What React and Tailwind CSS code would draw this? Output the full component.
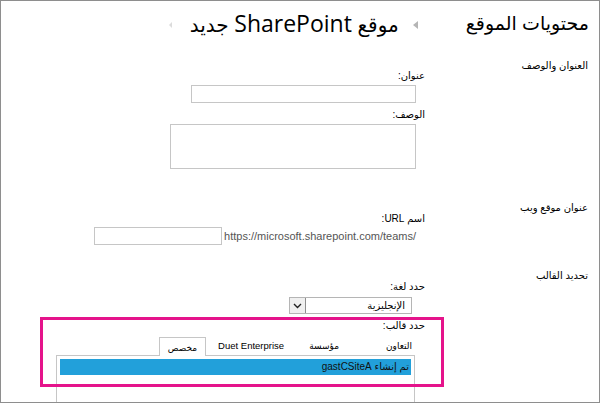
import React from "react";

const font = { fontFamily: '"Liberation Sans", "DejaVu Sans", sans-serif' };

export default function App() {
  const tabs = ["التعاون", "مؤسسة", "Duet Enterprise", "مخصص"];
  const gaps = ["ml-[47px]", "ml-[25px]", "ml-[12px]"];

  return (
    <div
      dir="rtl"
      style={font}
      className="relative w-[600px] h-[403px] overflow-hidden bg-white border border-[#8e8e8e] text-black"
    >
      {/* Header breadcrumb */}
      <div className="flex items-center h-[26px] mt-[10px] pr-[10px] text-[19px] leading-[26px]">
        <span>محتويات الموقع</span>
        <span className="mr-[48px] ml-[14px] mt-[2px]">
          <svg width="5" height="8" viewBox="0 0 5 8">
            <path d="M5 0 L0 4 L5 8 Z" fill="#b5b5b5" />
          </svg>
        </span>
        <span className="text-[20px]">
          موقع <span className="font-['Open_Sans'] text-[23px]">SharePoint</span> جديد
        </span>
        <span className="mr-[18px] mt-[2px]">
          <svg width="3" height="6" viewBox="0 0 3 6">
            <path d="M3 0 L0 3 L3 6 Z" fill="#dcdcdc" />
          </svg>
        </span>
      </div>

      <div className="pr-[11px] text-[10px] leading-[12px]">
        {/* Title & description */}
        <div className="flex mt-[23px]">
          <div className="w-[163px] shrink-0">العنوان والوصف</div>
          <div className="pt-[10px]">
            <div>عنوان:</div>
            <div className="mt-[3px] mr-[9px] w-[225px] h-[18px] border border-[#c6c6c6]" />
            <div className="mt-[6px]">الوصف:</div>
            <div className="mt-[3px] mr-[9px] w-[246px] h-[45px] border border-[#c6c6c6]" />
          </div>
        </div>

        {/* Web address */}
        <div className="flex mt-[33px]">
          <div className="w-[163px] shrink-0">عنوان موقع ويب</div>
          <div className="pt-[11px]">
            <div>اسم URL:</div>
            <div className="flex items-center mt-[2px] mr-[9px]">
              <span dir="ltr" className="text-[11px] text-[#555] ml-[2px]">
                https://microsoft.sharepoint.com/teams/
              </span>
              <div className="w-[128px] h-[18px] border border-[#c6c6c6]" />
            </div>
          </div>
        </div>

        {/* Template */}
        <div className="flex mt-[25px]">
          <div className="w-[163px] shrink-0">تحديد القالب</div>
          <div className="pt-[11px]">
            <div>حدد لغة:</div>
            <div className="flex mt-[4px] mr-[13px] w-[123px] h-[17px] border border-[#b5b5b5]">
              <div className="flex-1 pr-[6px] leading-[15px]">الإنجليزية</div>
              <div className="w-[16px] flex items-center justify-center border-r border-[#8e8e8e] bg-[#f0f0f0]">
                <svg width="9" height="6" viewBox="0 0 9 6">
                  <path d="M1 1 L4.5 4.5 L8 1" stroke="#222" strokeWidth="1.4" fill="none" />
                </svg>
              </div>
            </div>
            <div className="mt-[6px]">حدد قالب:</div>
          </div>
        </div>

        {/* Tabs + list */}
        <div className="mr-[173px] mt-[5px] w-[359px]">
          <div className="flex items-end h-[18px] pr-[3px] text-[9px]">
            {tabs.map((t, i) =>
              i === 3 ? (
                <div
                  key={t}
                  className="h-[19px] -mb-px px-[8px] border border-b-0 border-[#c6c6c6] bg-white leading-[20px] relative z-10"
                >
                  {t}
                </div>
              ) : (
                <div
                  key={t}
                  className={`leading-[18px] ${gaps[i]} ${i === 2 ? "text-[9.5px]" : ""}`}
                >
                  {t}
                </div>
              )
            )}
          </div>
          <div className="h-[60px] border border-[#c6c6c6] px-[3px] pt-[3px]">
            <div className="h-[16px] bg-[#22a0da] pr-[2px] leading-[16px] text-[#111]">
              تم إنشاء gastCSiteA
            </div>
          </div>
        </div>
      </div>

      {/* highlight annotation */}
      <div className="absolute left-[39px] top-[316px] w-[404px] h-[70px] border-[3px] border-[#e5138b]" />
    </div>
  );
}
